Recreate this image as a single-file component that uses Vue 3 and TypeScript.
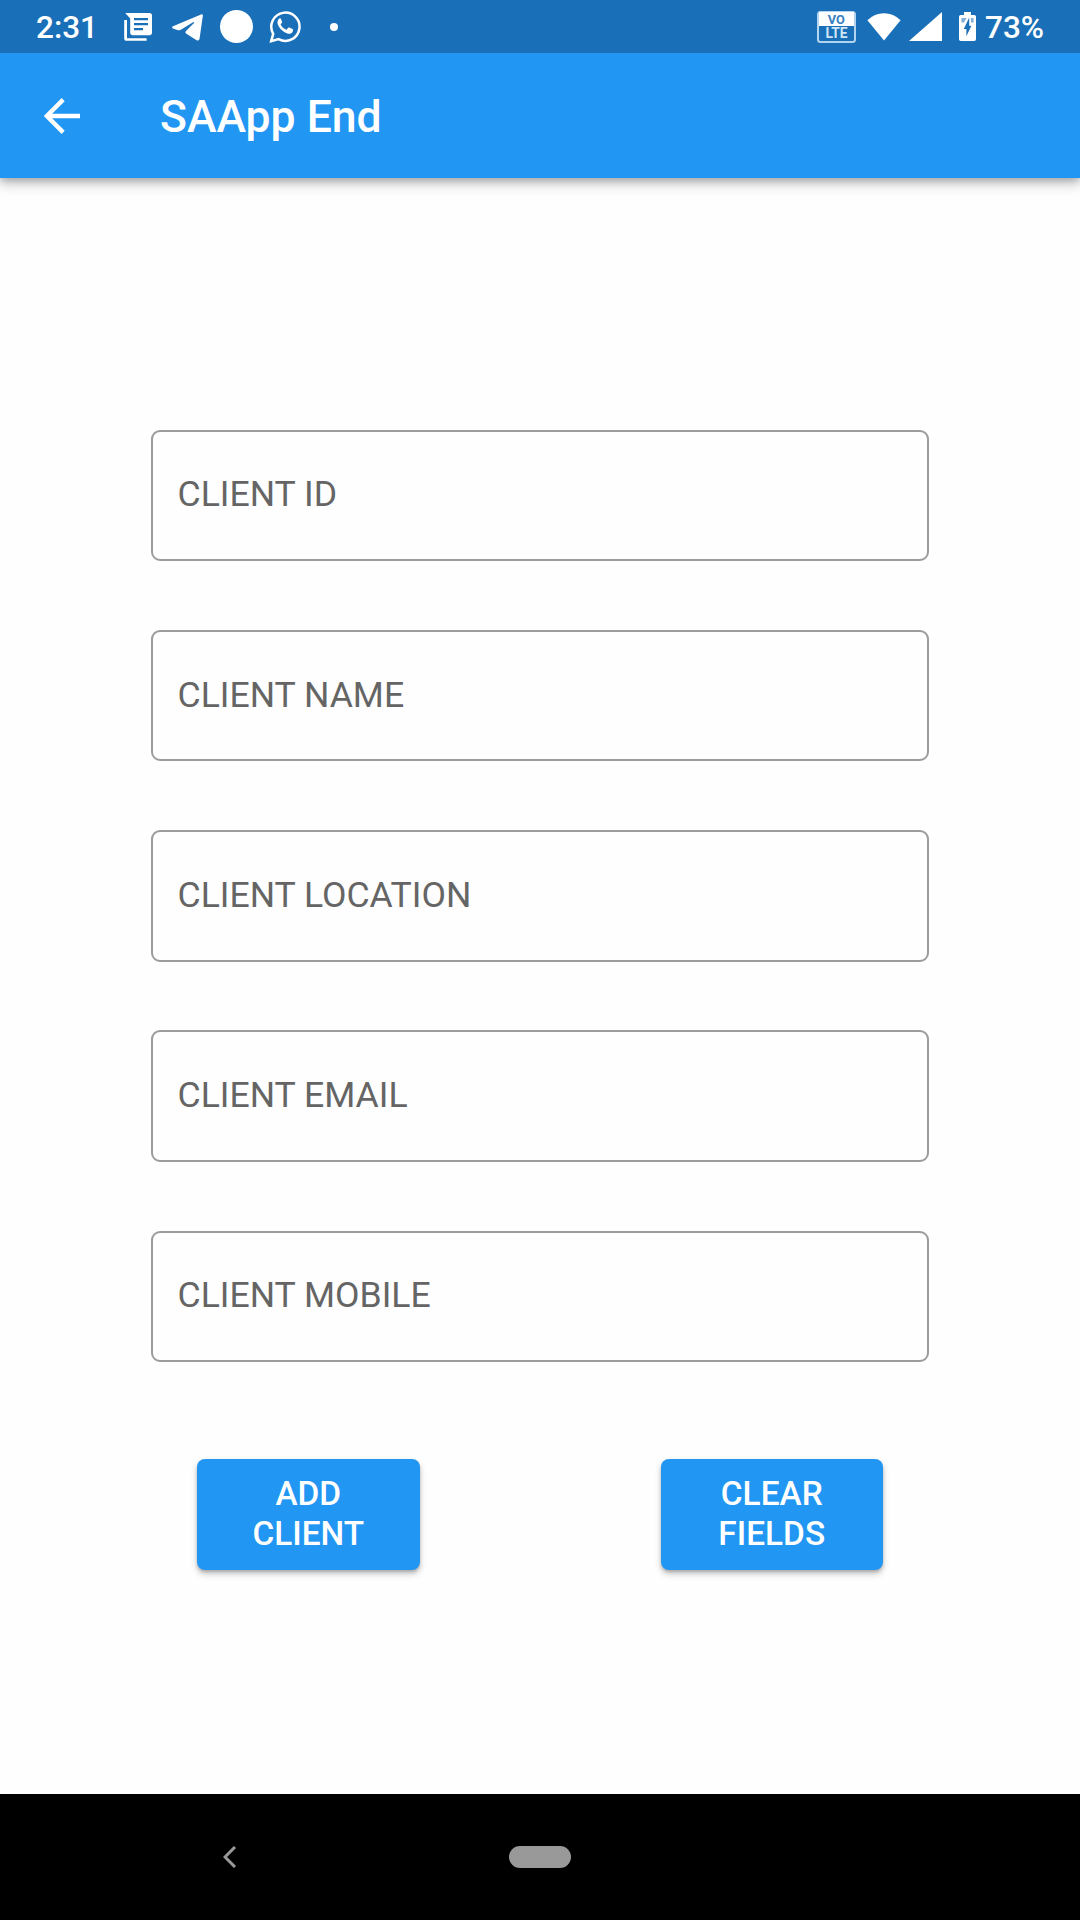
<script setup lang="ts">
import { ref } from 'vue'

interface Field {
  key: string
  label: string
}

const fields = ref<Field[]>([
  { key: 'id', label: 'CLIENT ID' },
  { key: 'name', label: 'CLIENT NAME' },
  { key: 'location', label: 'CLIENT LOCATION' },
  { key: 'email', label: 'CLIENT EMAIL' },
  { key: 'mobile', label: 'CLIENT MOBILE' },
])

const actions: string[][] = [
  ['ADD', 'CLIENT'],
  ['CLEAR', 'FIELDS'],
]
</script>

<template>
  <div class="screen">
    <header class="status">
      <span class="clock">2:31</span>
      <svg class="news" width="28" height="28" viewBox="0 0 28 28" fill="#fff">
        <path fill-rule="evenodd" d="M1.2 0H25.4Q28 0 28 2.6V19.6Q28 22.2 25.4 22.2H9Q6.2 22.2 6.2 19.6V5.6ZM10 4.9V7.3H24V4.9ZM10 9.9V12.3H24V9.9ZM10 14.9V17.3H19V14.9Z" />
        <path d="M0.2 7H3V25.2H22.6V27.8H2.8Q0.2 27.8 0.2 25.2Z" />
      </svg>
      <svg class="telegram" width="31" height="27" viewBox="0 0 31 27" fill="#fff">
        <path d="M29 0.4Q31.2-.4 30.8 2L27.6 24.6Q27.2 27.4 24.6 26.2L14 19.5Q12.8 18.3 14 17L22 8.9Q22.6 7.6 21 8.2L9.3 15.6Q7.5 16.7 5.2 16L1 14.6Q-.8 13.4 1 12.2Z" />
      </svg>
      <span class="disc"></span>
      <svg class="whatsapp" width="32" height="34" viewBox="0 0 32 34">
        <path d="M2.2 31.2L4.2 23.8A14.1 14.1 0 1 1 9.6 29.1Z" fill="none" stroke="#fff" stroke-width="2.5" />
        <path d="M11.2 8.6C10.3 8.4 9.6 8.9 9 9.7C7.6 11.6 7.9 13.8 9 15.9C11.1 19.7 14.1 22.3 18 23.7C20.3 24.4 22.7 23.3 23.4 21.6C23.8 20.4 23.7 19.5 23.1 19.2L19.9 17.7Q19.2 17.4 18.7 18L17.4 19.6Q17 20 16.4 19.7Q13.1 18.3 11.4 15.3Q11.1 14.8 11.5 14.3L12.6 12.9Q12.9 12.5 12.7 12L11.3 8.8Z" fill="#fff" transform="translate(.4 -.2)" />
      </svg>
      <span class="dot"></span>
      <div class="system">
        <svg class="volte" width="39" height="32" viewBox="0 0 39 32">
          <rect x="1" y="1" width="37" height="30" rx="2.5" fill="none" stroke="#b3d4ee" stroke-width="2" />
          <path d="M2 1H37V15H2Z" fill="#fff" />
          <text x="19.4" y="12.8" text-anchor="middle" font-size="12.8" font-weight="700" fill="#3580c0">VO</text>
          <text x="19.5" y="27.4" text-anchor="middle" font-size="13.8" font-weight="700" fill="#cfe4f5">LTE</text>
        </svg>
        <svg class="wifi" width="34" height="28" viewBox="0 0 34 28" fill="#fff">
          <path d="M0.4 7.3Q7.4.2 17 .2T33.6 7.3L17 27.6Z" />
        </svg>
        <svg class="signal" width="33" height="29" viewBox="0 0 33 29" fill="#fff">
          <path d="M33 0V29H0Z" />
        </svg>
        <svg class="battery" width="17" height="29" viewBox="0 0 17 29">
          <path d="M5 0H12V3H15.2Q17 3 17 4.8V27.2Q17 29 15.2 29H1.8Q0 29 0 27.2V4.8Q0 3 1.8 3H5Z" fill="#fff" />
          <path d="M2.4 6H7.6L5 10.6H2.4ZM12 6H14.6V10.6H12Z" fill="#82b2db" />
          <path d="M10.2 5.6V13.8H12.4L7.4 24.2V17H4.8Z" fill="#1a70b8" />
        </svg>
        <span class="percent">73%</span>
      </div>
    </header>

    <div class="appbar">
      <svg class="back" width="36" height="36" viewBox="0 0 36 36" fill="none" stroke="#fff" stroke-width="4.4">
        <path d="M36 18H4M19.2 1.6L2.8 18L19.2 34.4" />
      </svg>
      <h1>SAApp End</h1>
    </div>

    <main>
      <div v-for="field in fields" :key="field.key" class="field">
        <span>{{ field.label }}</span>
      </div>
      <div class="actions">
        <button v-for="words in actions" :key="words[0]" type="button">
          <span v-for="word in words" :key="word">{{ word }}</span>
        </button>
      </div>
    </main>

    <nav>
      <svg class="nav-back" width="14" height="22" viewBox="0 0 14 22" fill="none" stroke="#999" stroke-width="3">
        <path d="M12 1L2 11L12 21" />
      </svg>
      <span class="pill"></span>
    </nav>
  </div>
</template>

<style>
body {
  margin: 0;
}
</style>

<style scoped>
.screen {
  width: 1080px;
  height: 1920px;
  display: flex;
  flex-direction: column;
  background: #fefefe;
  font-family: Roboto, sans-serif;
  overflow: hidden;
}
.status {
  position: relative;
  z-index: 1;
  height: 53px;
  flex: none;
  box-sizing: border-box;
  padding: 0 36px;
  display: flex;
  align-items: center;
  background: #1a70b8;
  color: #fff;
  font-size: 31.5px;
  font-weight: 500;
}
.status svg {
  flex: none;
  display: block;
}
.clock {
  width: 88px;
  line-height: 51px;
  padding-top: 2px;
}
.telegram {
  margin-left: 20px;
  margin-top: 2px;
}
.disc {
  width: 33px;
  height: 33px;
  margin-left: 17px;
  border-radius: 50%;
  background: #fff;
}
.whatsapp {
  margin-left: 16px;
}
.dot {
  width: 8px;
  height: 8px;
  margin-left: 29px;
  border-radius: 50%;
  background: #fff;
}
.system {
  margin-left: auto;
  display: flex;
  align-items: center;
}
.wifi {
  margin-left: 11px;
}
.signal {
  margin-left: 8.5px;
}
.battery {
  margin-left: 17px;
}
.percent {
  width: 59px;
  margin-left: 9px;
  line-height: 51px;
  padding-top: 2px;
  white-space: nowrap;
}
.appbar {
  position: relative;
  height: 125px;
  flex: none;
  box-sizing: border-box;
  display: flex;
  align-items: center;
  padding: 0 0 1px 44px;
  background: #2196f3;
  color: #fff;
  box-shadow: 0 6px 12px rgba(0, 0, 0, 0.22), 0 3px 6px rgba(0, 0, 0, 0.16);
}
.back {
  margin-top: 1px;
}
h1 {
  margin: 4px 0 0 80px;
  font-size: 44.5px;
  font-weight: 500;
  line-height: 60px;
  white-space: nowrap;
}
main {
  flex: 1;
  padding: 251.5px 151px 0;
}
.field {
  height: 131.5px;
  margin-bottom: 68.8px;
  box-sizing: border-box;
  border: 2px solid #9b9b9b;
  border-radius: 9px;
  padding: 0 24.5px 2px;
  display: flex;
  align-items: center;
  color: #656565;
  font-size: 35.6px;
}
.actions {
  display: flex;
  justify-content: space-between;
  padding: 0 46px;
  margin-top: 96.5px;
}
button {
  width: 222.5px;
  height: 111px;
  padding: 0 0 1px;
  box-sizing: border-box;
  border: 0;
  border-radius: 8px;
  display: flex;
  flex-direction: column;
  align-items: center;
  justify-content: center;
  background: #2196f3;
  color: #fff;
  font: 500 33.4px/40px Roboto, sans-serif;
  box-shadow: 0 4px 6px rgba(0, 0, 0, 0.22), 0 2px 3px rgba(0, 0, 0, 0.16);
}
nav {
  height: 126px;
  flex: none;
  box-sizing: border-box;
  padding: 0 0 0 223px;
  display: flex;
  align-items: center;
  background: #000;
}
.pill {
  width: 62px;
  height: 22px;
  margin-left: 272px;
  border-radius: 11px;
  background: #999;
}
</style>
